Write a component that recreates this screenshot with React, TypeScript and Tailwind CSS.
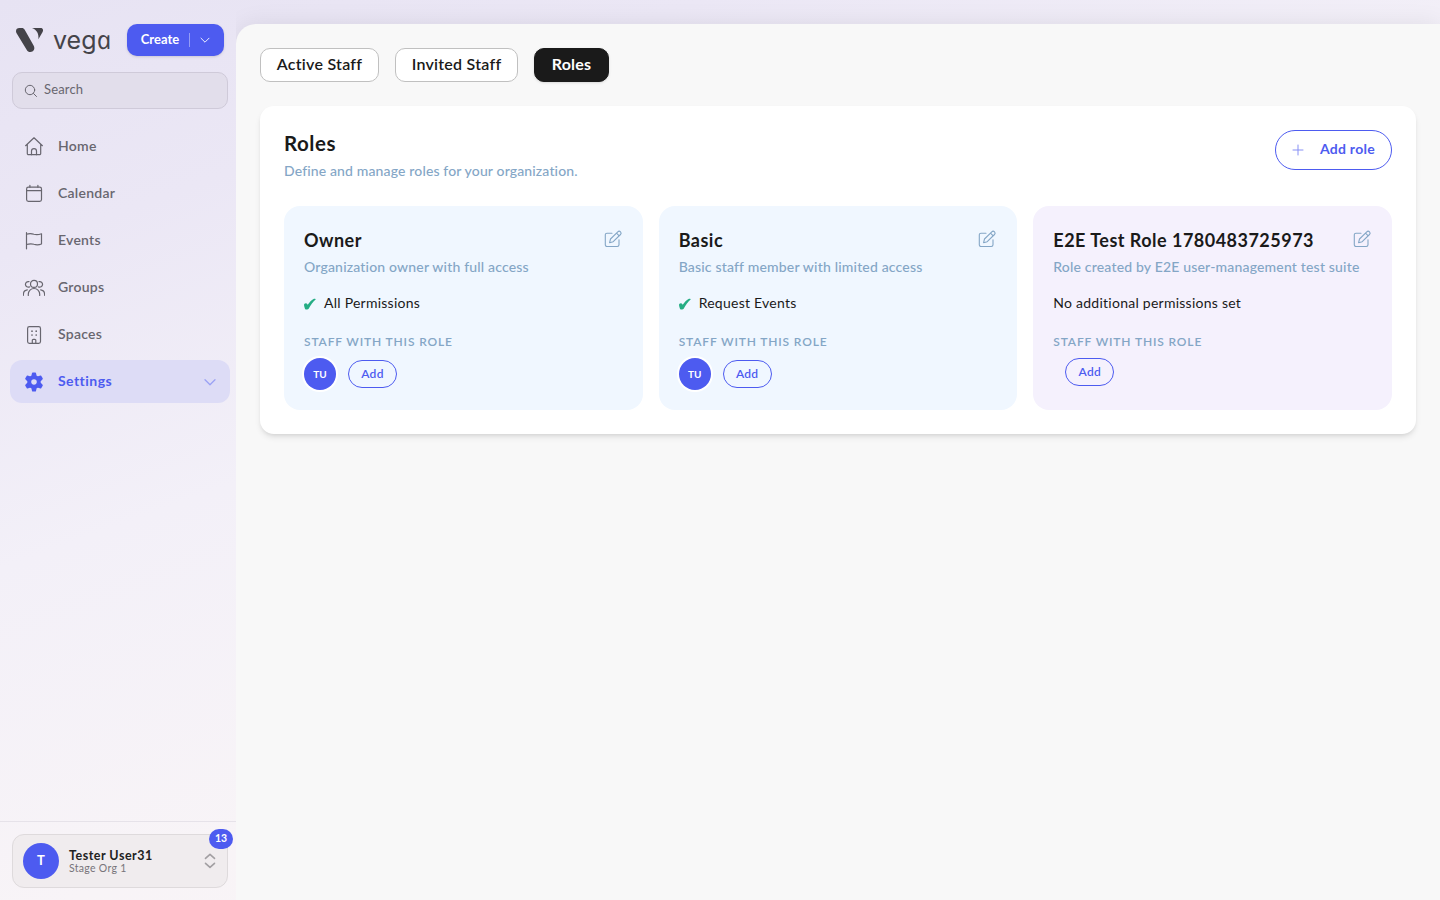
import type { ReactNode } from "react"
import clsx from "clsx"

interface Role {
    name:        string
    description: string
    permission?: string
    staff:       string[]
    tone:        "blue" | "purple"
}

const ROLES: Role[] = [
    { name: "Owner", description: "Organization owner with full access", permission: "All Permissions", staff: ["TU"], tone: "blue" },
    { name: "Basic", description: "Basic staff member with limited access", permission: "Request Events", staff: ["TU"], tone: "blue" },
    { name: "E2E Test Role 1780483725973", description: "Role created by E2E user-management test suite", staff: [], tone: "purple" },
]

function Icon({ children, size = 22, className, stroke = 1.2 }: { children: ReactNode; size?: number; className?: string; stroke?: number }) {
    return (
        <svg
            width={size} height={size} viewBox={`0 0 ${size} ${size}`}
            fill="none" stroke="currentColor" strokeWidth={stroke}
            strokeLinecap="round" strokeLinejoin="round"
            className={clsx("shrink-0", className)}
        >
            {children}
        </svg>
    )
}

const HomeIcon = () => (
    <Icon>
        <path d="M2.6 9.7 11 1.8l8.4 7.9M4.3 8.2v9.3a1.2 1.2 0 0 0 1.2 1.2h11a1.2 1.2 0 0 0 1.2-1.2V8.2" />
        <path d="M8.5 18.7v-3.6a2.5 2.5 0 0 1 5 0v3.6" />
    </Icon>
)

const CalendarIcon = () => (
    <Icon>
        <rect x="3.6" y="4.2" width="14.9" height="14.2" rx="1.8" />
        <path d="M3.6 7.6h14.9M6.9 2.3v1.9M14.9 2.3v1.9" />
    </Icon>
)

const FlagIcon = () => (
    <Icon>
        <path d="M3.5 2.5v16.300M3.500 4.300c3-1 5-.8 7.400 0 2.600.8 4.900.5 7.600-.5v10.200c-2.700 1-5 1.100-7.600.3-2.400-.8-4.400-.7-7.400.2" />
    </Icon>
)

const GroupsIcon = () => (
    <Icon>
        <circle cx="11" cy="6.9" r="3.5" />
        <path d="M5.3 18.5v-1.3a5.7 5.7 0 0 1 11.4 0v1.3M6 4.7a2.8 2.8 0 1 0 .5 5.2M16 4.7a2.8 2.8 0 1 1-.5 5.2M.4 18.3v-1a4.5 4.5 0 0 1 3.9-4.4M21.6 18.3v-1a4.5 4.5 0 0 0-3.9-4.4" />
    </Icon>
)

const SpacesIcon = () => (
    <Icon>
        <rect x="4.6" y="2.6" width="12.9" height="16.8" rx="1.8" />
        <path d="M9.3 19.4v-3.2a.9.9 0 0 1 .9-.9h1.7a.9.9 0 0 1 .9.9v3.2" />
        <path d="M9 7.2h.01M13.2 7.2h.01M9 11h.01M13.2 11h.01" strokeWidth="1.7" />
    </Icon>
)

const SettingsIcon = () => (
    <svg width="22" height="22" viewBox="0 0 22 22" fill="currentColor" className="shrink-0">
        <path
            fillRule="evenodd"
            stroke="currentColor" strokeWidth="1.4" strokeLinejoin="round"
            d="M9.700 2.200h2.600l.7 2.900 1.700 1 2.900-.9 1.500 2.500-2.100 2.200v2.200l2.100 2.200-1.500 2.500-2.900-.9-1.700 1-.7 2.900H9.700L9 16.900l-1.700-1-2.900.9-1.500-2.500L5 12.100V9.900L2.900 7.700l1.500-2.500 2.900.9L9 5.100ZM11 7.500a3.500 3.500 0 1 0 0 7 3.500 3.500 0 0 0 0-7Z"
        />
    </svg>
)

const EditIcon = () => (
    <Icon size={20} stroke={1.1}>
        <path d="M9 4.200H4A1.700 1.700 0 0 0 2.300 5.900v9.900A1.700 1.700 0 0 0 4 17.500h10.300a1.700 1.700 0 0 0 1.700-1.700V10.800" />
        <path d="m6.600 13.700.9-3.700 7.300-7.200a1.850 1.850 0 0 1 2.700 2.700l-7.300 7.200ZM13.500 4.100l2.700 2.700" />
    </Icon>
)

const NAV = [
    { label: "Home", icon: HomeIcon },
    { label: "Calendar", icon: CalendarIcon },
    { label: "Events", icon: FlagIcon },
    { label: "Groups", icon: GroupsIcon },
    { label: "Spaces", icon: SpacesIcon },
    { label: "Settings", icon: SettingsIcon, active: true },
]

function Logo() {
    return (
        <div className="flex h-8 w-[111px] items-center pl-4 text-[#444349]">
            <svg width="28" height="26" viewBox="0 0 28 26" fill="currentColor" className="shrink-0">
                <path d="M0 4.200C0 2 1.300 1 3.400 1h2.400c1.300 0 2.200.6 2.900 1.800l8.900 15.700c1.900 3.400 0 6.500-3.300 6.500-1.600 0-2.700-.7-3.500-2.100L.6 6.200C.2 5.500 0 4.900 0 4.200Z" />
                <path d="M16 1h8.600c2.200 0 3.100 2.100 2 4l-4.200 7.300c.6-5.500-1.500-9.400-6.400-11.300Z" />
            </svg>
            {/* The wordmark ends in a single-storey "a": an upright-skewed italic */}
            <span className="ml-[9px] mt-[-2px] whitespace-nowrap font-[Inter,sans-serif] text-[25px] leading-8">
                veg<span className="inline-block skew-x-[12deg] font-['Open_Sans',sans-serif] text-[25.5px] italic leading-8">a</span>
            </span>
        </div>
    )
}

function Sidebar() {
    return (
        <aside className="flex w-[236px] shrink-0 flex-col">
            <div className="flex items-center gap-4 pt-6">
                <Logo />
                <button className="flex h-8 w-[97px] items-center rounded-[10px] bg-[#4d5bf0] pl-[13.5px] text-[13px] font-bold text-white shadow-sm">
                    <span className="w-[39px]">Create</span>
                    <span className="ml-[9px] h-[14px] w-px bg-white/40" />
                    <Icon size={12} stroke={1} className="ml-[9px] text-white/90"><path d="m2 4.200 4 4 4-4" /></Icon>
                </button>
            </div>

            <div className="ml-3 mr-2 mt-4 flex h-[37px] shrink-0 items-center rounded-[10px] border border-[#cfcad9] bg-[#e2deeb] pl-[11px] text-[#68666f]">
                <Icon size={14} stroke={1}><circle cx="6" cy="6" r="4.7" /><path d="m9.500 9.500 3 3" /></Icon>
                <span className="-mt-px ml-[6px] text-[13px] tracking-[0.15px]">Search</span>
            </div>

            <nav className="mt-4 flex flex-1 flex-col gap-1 pl-[10px] pr-[6px]">
                {NAV.map(({ label, icon: NavIcon, active }) => (
                    <a
                        key={label}
                        className={clsx(
                            "flex h-[43px] items-center rounded-xl px-[13px] text-[14px]",
                            active ? "bg-[#dddcf6] font-bold tracking-[0.45px] text-[#4d5bf0]" : "font-semibold tracking-[0.25px] text-[#68666f]"
                        )}
                    >
                        <NavIcon />
                        <span className="-mt-0.5 ml-[13px]">{label}</span>
                        {active && (
                            <Icon size={14} stroke={1.3} className="ml-auto text-[#9ba2f4]"><path d="m2 4.700 5 5 5-5" /></Icon>
                        )}
                    </a>
                ))}
            </nav>

            <div className="border-t border-[#e6e2e9] py-3 pl-3 pr-2">
                <div className="relative flex h-[54px] items-center rounded-xl border border-[#dedadc] bg-[#f0ecee] pl-[10px]">
                    <span className="flex size-9 items-center justify-center rounded-full bg-[#4d5bf0] text-[13px] font-bold text-white">T</span>
                    <span className="ml-[10px] flex flex-col">
                        <span className="text-[12.5px] font-bold leading-[14px] tracking-[0.5px] text-[#222]">Tester User31</span>
                        <span className="-mt-px text-[10.5px] leading-3 tracking-[0.3px] text-[#77747a]">Stage Org 1</span>
                    </span>
                    <Icon size={16} stroke={1.6} className="ml-auto mr-[9px] text-[#a29fa2]">
                        <path d="m3.500 5.400 4.500-4 4.500 4M3.500 10.400l4.500 4 4.500-4" />
                    </Icon>
                    <span className="absolute -right-[6px] -top-[6px] flex h-5 w-6 items-center justify-center rounded-full bg-[#4d5bf0] pb-px text-[10.5px] font-bold text-white">13</span>
                </div>
            </div>
        </aside>
    )
}

function AddButton({ className }: { className?: string }) {
    return (
        <button className={clsx("h-7 w-[49px] rounded-full border border-[#4d5bf0] text-[12px] font-semibold tracking-[0.3px] text-[#4d5bf0]", className)}>
            Add
        </button>
    )
}

function RoleCard({ role }: { role: Role }) {
    return (
        <div className={clsx("rounded-2xl p-5", role.tone === "blue" ? "bg-[#f0f7ff]" : "bg-[#f5f1fd]")}>
            <div className="flex items-start justify-between">
                <h3 className="text-[18px] font-bold leading-7 tracking-[0.48px] text-[#1a1a1a]">{role.name}</h3>
                <span className="pt-[3px] text-[#84a6c6]"><EditIcon /></span>
            </div>
            <p className="mt-[3px] text-[14px] font-medium leading-5 tracking-[0.18px] text-[#84a6c6]">{role.description}</p>
            <div className="mt-4 flex items-center text-[14px] leading-5 tracking-[0.25px] text-[#1a1a1a]">
                {role.permission && (
                    <svg width="12" height="12" viewBox="0 0 12 12" fill="#25ad84" className="mr-2 mt-px">
                        <path d="M.1 7.400C-.2 6.200.6 5.100 2 5.200c.9.1 1.300.7 1.700 1.500C5.500 4 7.500 1.900 9.500.9c.9-.4 2.300-.2 2.300.3C9 3.900 6.700 7 4.800 10.500c-.6 1.100-3.200 1.300-3.700.4C.7 10 .3 8.500.1 7.400Z" />
                    </svg>
                )}
                <span>{role.permission ?? "No additional permissions set"}</span>
            </div>
            <h4 className="mt-[21px] text-[12px] font-semibold uppercase leading-4 tracking-[0.85px] text-[#84a6c6]">Staff with this role</h4>
            <div className="mt-2 flex h-8 items-center gap-3">
                {role.staff.map((initials) => (
                    <span key={initials} className="flex size-8 items-center justify-center rounded-full bg-[#4d5bf0] text-[10px] font-bold text-white ring-2 ring-white">
                        {initials}
                    </span>
                ))}
                <AddButton className={role.staff.length ? undefined : "ml-3 self-start"} />
            </div>
        </div>
    )
}

const TABS = [
    { label: "Active Staff", className: "w-[119px]" },
    { label: "Invited Staff", className: "w-[123px]" },
    { label: "Roles", className: "w-[75px]", active: true },
]

export default function App() {
    return (
        <div className="flex h-screen w-full overflow-hidden bg-[linear-gradient(160deg,#e7e3f3_0%,#ebe7f5_18%,#f3f0f8_40%,#f8f4f7_65%,#faf5f4_100%)] font-[Lato,sans-serif]">
            <Sidebar />
            <div className="flex min-w-0 flex-1 flex-col overflow-hidden pt-6">
                <main className="flex-1 rounded-tl-[20px] bg-[#f8f8f8] p-6 shadow-[0_0_24px_rgba(0,0,0,0.08)]">
                    <div className="flex gap-4">
                        {TABS.map((tab) => (
                            <button
                                key={tab.label}
                                className={clsx(
                                    "h-[34px] rounded-[10px] border pb-0.5 text-[16px] tracking-[0.25px]",
                                    tab.className,
                                    tab.active
                                        ? "border-[#1a1a1a] bg-[#1a1a1a] font-bold text-white shadow-sm"
                                        : "border-[#c0c0c0] bg-white font-semibold text-[#1a1a1a]"
                                )}
                            >
                                {tab.label}
                            </button>
                        ))}
                    </div>

                    <section className="mt-6 rounded-[14px] bg-white p-6 shadow-md">
                        <div className="flex h-[76px] items-start justify-between">
                            <div>
                                <h2 className="-mt-px text-[20.5px] font-bold leading-7 tracking-[0.55px] text-[#1a1a1a]">Roles</h2>
                                <p className="mt-1 text-[14px] font-medium leading-5 tracking-[0.14px] text-[#84a6c6]">Define and manage roles for your organization.</p>
                            </div>
                            <button className="flex h-10 w-[117px] items-center rounded-full border border-[#4d5bf0] pl-4 text-[14px] font-bold text-[#4d5bf0]">
                                <Icon size={12} stroke={1} className="-mt-px text-[#8790f5]"><path d="M6 1v10M1 6h10" /></Icon>
                                <span className="-mt-[3px] ml-4 tracking-[0.25px]">Add role</span>
                            </button>
                        </div>
                        <div className="grid grid-cols-3 gap-4">
                            {ROLES.map((role) => <RoleCard key={role.name} role={role} />)}
                        </div>
                    </section>
                </main>
            </div>
        </div>
    )
}
